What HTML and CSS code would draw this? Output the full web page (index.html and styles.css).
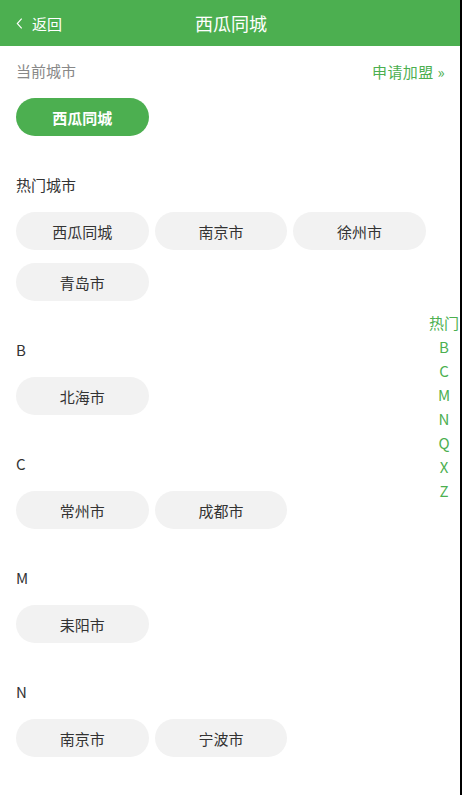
FILE: index.html
```html
<!DOCTYPE html>
<html lang="zh-CN">
<head>
<meta charset="utf-8">
<title>西瓜同城</title>
<link rel="stylesheet" href="styles.css">
</head>
<body>
<div class="page">
  <header class="topbar">
    <a class="back"><svg class="back-icon" viewBox="0 0 8 14" width="7" height="13"><path d="M6.5 1.5 L1.5 7 L6.5 12.5" fill="none" stroke="#fff" stroke-width="1.3"/></svg><span>返回</span></a>
    <h1 class="title">西瓜同城</h1>
  </header>

  <section class="section">
    <div class="section-head">
      <span class="label label-muted">当前城市</span>
      <a class="join">申请加盟 »</a>
    </div>
    <div class="chips">
      <span class="chip chip-active">西瓜同城</span>
    </div>
  </section>

  <section class="section">
    <div class="section-head"><span class="label">热门城市</span></div>
    <div class="chips">
      <span class="chip">西瓜同城</span>
      <span class="chip">南京市</span>
      <span class="chip">徐州市</span>
      <span class="chip">青岛市</span>
    </div>
  </section>

  <section class="section">
    <div class="section-head"><span class="label">B</span></div>
    <div class="chips">
      <span class="chip">北海市</span>
    </div>
  </section>

  <section class="section">
    <div class="section-head"><span class="label">C</span></div>
    <div class="chips">
      <span class="chip">常州市</span>
      <span class="chip">成都市</span>
    </div>
  </section>

  <section class="section">
    <div class="section-head"><span class="label">M</span></div>
    <div class="chips">
      <span class="chip">耒阳市</span>
    </div>
  </section>

  <section class="section">
    <div class="section-head"><span class="label">N</span></div>
    <div class="chips">
      <span class="chip">南京市</span>
      <span class="chip">宁波市</span>
    </div>
  </section>

  <nav class="index">
    <span>热门</span>
    <span>B</span>
    <span>C</span>
    <span>M</span>
    <span>N</span>
    <span>Q</span>
    <span>X</span>
    <span>Z</span>
  </nav>
</div>
</body>
</html>
```

FILE: styles.css
```css
html, body {
  margin: 0;
  padding: 0;
  background: #000;
}
body {
  font-family: "Noto Sans CJK SC", "Noto Sans", sans-serif;
  width: 462px;
  height: 795px;
  overflow: hidden;
}
.page {
  position: relative;
  width: 460px;
  height: 795px;
  background: #fff;
  overflow: hidden;
}
.topbar {
  position: relative;
  height: 46px;
  background: #4caf50;
  display: flex;
  align-items: center;
  justify-content: center;
}
.back {
  position: absolute;
  left: 16px;
  top: 0;
  height: 46px;
  display: flex;
  align-items: center;
  gap: 9px;
  color: #fff;
  font-size: 15px;
}
.back-icon {
  display: block;
}
.title {
  margin: 0 0 0 2px;
  color: #fff;
  font-size: 18px;
  font-weight: 400;
  line-height: 46px;
}
.section {
  padding: 0 16px;
  margin-bottom: 39px;
}
.section:first-of-type {
  padding-top: 15px;
}
.section-head {
  display: flex;
  justify-content: space-between;
  align-items: center;
  height: 20px;
  margin-bottom: 17px;
}
.label {
  font-size: 15px;
  color: #333;
  line-height: 20px;
}
.label-muted {
  color: #888;
}
.join {
  font-size: 15px;
  color: #4caf50;
  letter-spacing: 0.4px;
  margin-right: -1px;
}
.chips {
  display: flex;
  flex-wrap: wrap;
  column-gap: 6px;
  row-gap: 13px;
  width: 412px;
}
.chip {
  width: 132.6px;
  height: 38px;
  border-radius: 19px;
  background: #f2f2f2;
  color: #333;
  font-size: 15px;
  display: flex;
  align-items: center;
  justify-content: center;
}
.chip-active {
  background: #4caf50;
  color: #fff;
  font-weight: 700;
}
.index {
  position: absolute;
  right: 0;
  top: 311px;
  width: 32px;
  display: flex;
  flex-direction: column;
  align-items: center;
  color: #4caf50;
  font-size: 15px;
  line-height: 24px;
}
```
